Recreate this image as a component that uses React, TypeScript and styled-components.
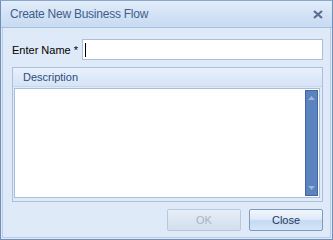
import React from "react";
import styled, { createGlobalStyle } from "styled-components";

const Global = createGlobalStyle`
  html, body { margin: 0; padding: 0; background: #ffffff; }
  body { font-family: Tahoma, "DejaVu Sans", "Liberation Sans", sans-serif; }
`;

const Window = styled.div`
  width: 333px;
  height: 240px;
  box-sizing: border-box;
  border: 1px solid #6f8fb8;
  border-top-color: #8aa6cc;
  background: #dfeaf8;
  display: flex;
  flex-direction: column;
  overflow: hidden;
`;

const TitleBar = styled.div`
  height: 27px;
  flex: none;
  box-sizing: border-box;
  display: flex;
  align-items: center;
  justify-content: space-between;
  padding: 0 9px 0 9px;
  background: linear-gradient(#e3edfa, #d3e2f5 50%, #c9dbf2);
  border-bottom: 1px solid #a7c0e0;
`;

const Title = styled.span`
  font-family: "Liberation Sans", Arial, sans-serif;
  font-size: 12px;
  letter-spacing: -0.25px;
  color: #3e5f8a;
`;

const CloseX = styled.svg`
  width: 10px;
  height: 9px;
`;

const Body = styled.div`
  flex: 1;
  display: flex;
  flex-direction: column;
  margin: 0 1px 1px 1px;
  border: 1px solid #b9cde8;
  border-top: none;
  padding: 11px 7px 6px 9px;
  gap: 7px;
`;

const NameRow = styled.div`
  display: flex;
  align-items: center;
  gap: 4px;
`;

const Label = styled.span`
  font-family: "Liberation Sans", Arial, sans-serif;
  font-size: 11px;
  color: #000;
  white-space: nowrap;
`;

const Input = styled.div`
  flex: 1;
  height: 21px;
  box-sizing: border-box;
  background: #fff;
  border: 1px solid #abbfd9;
  display: flex;
  align-items: center;
  padding-left: 2px;
`;

const Caret = styled.span`
  width: 1px;
  height: 14px;
  background: #000;
`;

const Group = styled.div`
  flex: 1;
  display: flex;
  flex-direction: column;
  border: 1px solid #abc0dc;
  background: #dfeaf8;
`;

const GroupHeader = styled.div`
  height: 19px;
  box-sizing: border-box;
  display: flex;
  align-items: center;
  padding-left: 10px;
  background: linear-gradient(#e8f0fb, #d6e4f6);
  border-bottom: 1px solid #c6d7ee;
`;

const GroupTitle = styled.span`
  font-family: "Liberation Sans", Arial, sans-serif;
  font-size: 11px;
  color: #2a4d80;
`;

const GroupContent = styled.div`
  flex: 1;
  padding: 1px 2px 3px 1px;
  display: flex;
`;

const TextArea = styled.div`
  flex: 1;
  display: flex;
  justify-content: flex-end;
  background: #fff;
  border: 1px solid #a9bed9;
  padding: 1px;
`;

const ScrollBar = styled.div`
  width: 13px;
  display: flex;
  flex-direction: column;
  justify-content: space-between;
  align-items: center;
  background: #5b83bf;
  border: 1px solid #3f66a0;
  box-sizing: border-box;
  padding: 5px 0;
`;

const Arrow = styled.svg`
  width: 7px;
  height: 4px;
`;

const Footer = styled.div`
  display: flex;
  justify-content: flex-end;
  gap: 8px;
`;

const Button = styled.div<{ $disabled?: boolean }>`
  width: 74px;
  height: 22px;
  box-sizing: border-box;
  display: flex;
  align-items: center;
  justify-content: center;
  border: 1px solid ${(p) => (p.$disabled ? "#b8c8dc" : "#7d9ac0")};
  border-radius: 2px;
  background: ${(p) =>
    p.$disabled
      ? "linear-gradient(#e6eef8, #dce6f2 50%, #d3dfee)"
      : "linear-gradient(#f2f7fd, #dfeaf8 45%, #c4d9f2 55%, #d6e6f9)"};
  font-family: "Liberation Sans", Arial, sans-serif;
  font-size: 11px;
  color: ${(p) => (p.$disabled ? "#a6b3c4" : "#1e395b")};
`;

export default function App() {
  return (
    <>
      <Global />
      <Window>
        <TitleBar>
          <Title>Create New Business Flow</Title>
          <CloseX viewBox="0 0 10 9">
            <path d="M1 1 L9 8 M9 1 L1 8" stroke="#5a6f8c" strokeWidth="2.2" />
          </CloseX>
        </TitleBar>
        <Body>
          <NameRow>
            <Label>Enter Name *</Label>
            <Input>
              <Caret />
            </Input>
          </NameRow>
          <Group>
            <GroupHeader>
              <GroupTitle>Description</GroupTitle>
            </GroupHeader>
            <GroupContent>
              <TextArea>
                <ScrollBar>
                  <Arrow viewBox="0 0 7 4">
                    <path d="M0 4 L3.5 0 L7 4 Z" fill="#9ab4da" />
                  </Arrow>
                  <Arrow viewBox="0 0 7 4">
                    <path d="M0 0 L3.5 4 L7 0 Z" fill="#9ab4da" />
                  </Arrow>
                </ScrollBar>
              </TextArea>
            </GroupContent>
          </Group>
          <Footer>
            <Button $disabled>OK</Button>
            <Button>Close</Button>
          </Footer>
        </Body>
      </Window>
    </>
  );
}
